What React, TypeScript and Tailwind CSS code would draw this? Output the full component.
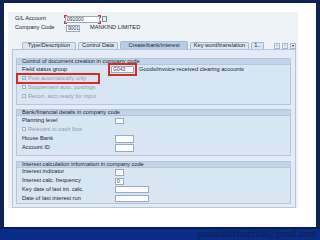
import React from "react";

function Box({ w, h = "h-[7px]", children }: { w: string; h?: string; children?: React.ReactNode }) {
  return (
    <div className={`${w} ${h} border border-[#97abc3] bg-white flex items-center px-[1px] text-[5px] leading-none text-[#1e2a3a]`}>
      {children}
    </div>
  );
}

function Check({ label, checked }: { label: string; checked?: boolean }) {
  return (
    <div className="flex items-center gap-[2px] text-[#8e9bab]">
      <div className="w-[4px] h-[4px] border border-[#9fb0c4] bg-[#eef3f8] flex items-center justify-center">
        {checked && (
          <svg viewBox="0 0 4 4" className="w-[4px] h-[4px]">
            <path d="M0.6 2 L1.6 3 L3.4 0.8" stroke="#6b7686" strokeWidth="0.8" fill="none" />
          </svg>
        )}
      </div>
      <span>{label}</span>
    </div>
  );
}

function Row({ label, lw, children, h = "h-[9px]" }: { label: string; lw: string; children?: React.ReactNode; h?: string }) {
  return (
    <div className={`flex items-center ${h}`}>
      <span className={`${lw} shrink-0`}>{label}</span>
      {children}
    </div>
  );
}

function Group({ title, children, cls }: { title: string; children: React.ReactNode; cls: string }) {
  return (
    <div className={`border border-[#b3c6dc] bg-[#d8e6f4] ${cls}`}>
      <div className="h-[6px] bg-[#c3d4e9] border-b border-[#b3c6dc] pl-[5px] flex items-center">{title}</div>
      <div className="pl-[5px]">{children}</div>
    </div>
  );
}

export default function App() {
  const tabs = [
    { t: "Type/Description", w: "w-[54px]" },
    { t: "Control Data", w: "w-[40px]" },
    { t: "Create/bank/interest", w: "w-[68px]", active: true },
    { t: "Key word/translation", w: "w-[59px]" },
    { t: "1..", w: "w-[13px]" },
  ];

  return (
    <div className="w-[320px] h-[240px] bg-[#0f2550] flex flex-col font-['Liberation_Sans',Arial,sans-serif] text-[5.7px] leading-none text-[#1a2433]">
      <div className="mx-[4px] mt-[3px] h-[224px] bg-white pt-[9px] pl-[4px]">
        <div className="w-[290px] h-[196px] bg-[#eef3f8] flex flex-col">
          {/* header fields */}
          <div className="pl-[7px] pt-[3px] flex flex-col gap-[1px]">
            <div className="flex items-center h-[8px]">
              <span className="w-[50px]">G/L Account</span>
              <div className="relative">
                <Box w="w-[35px]">091000</Box>
                <div className="absolute -left-[1px] -top-[1px] w-[3px] h-[3px] border-l border-t border-[#d23a3a]" />
                <div className="absolute -right-[1px] -top-[1px] w-[3px] h-[3px] border-r border-t border-[#d23a3a]" />
                <div className="absolute -left-[1px] -bottom-[1px] w-[3px] h-[3px] border-l border-b border-[#d23a3a]" />
                <div className="absolute -right-[1px] -bottom-[1px] w-[3px] h-[3px] border-r border-b border-[#d23a3a]" />
              </div>
              <div className="ml-[2px] w-[5px] h-[6px] border border-[#7d8fa6] bg-[#e6edf5]" />
            </div>
            <div className="flex items-center h-[8px]">
              <span className="w-[51px]">Company Code</span>
              <Box w="w-[14px]">9001</Box>
              <span className="ml-[10px]">MANKIND LIMITED</span>
            </div>
          </div>

          {/* tabs */}
          <div className="mt-[9px] ml-[14px] flex items-end h-[8px] gap-[2px]">
            {tabs.map((tb) => (
              <div
                key={tb.t}
                className={`${tb.w} h-[7px] rounded-t-[2px] border border-b-0 border-[#a4b9d1] flex items-center justify-center ${
                  tb.active ? "bg-[#b7cde6] h-[8px]" : "bg-[#dde7f2]"
                }`}
              >
                {tb.t}
              </div>
            ))}
            <div className="ml-[8px] flex gap-[2px] items-center h-[7px]">
              <div className="w-[6px] h-[6px] border border-[#a4b9d1] bg-[#e6edf5] text-[4px] flex items-center justify-center">‹</div>
              <div className="w-[6px] h-[6px] border border-[#a4b9d1] bg-[#e6edf5] text-[4px] flex items-center justify-center">›</div>
              <div className="w-[6px] h-[6px] border border-[#a4b9d1] bg-[#e6edf5] text-[4px] flex items-center justify-center">▾</div>
            </div>
          </div>

          {/* tab content */}
          <div className="ml-[4px] w-[284px] h-[159px] border border-[#b3c6dc] bg-[#e3ecf6] pl-[3px] pt-[8px] flex flex-col">
            <Group title="Control of document creation in company code" cls="w-[275px] h-[47px]">
              <Row label="Field status group" lw="w-[89px]">
                <div className="border-2 border-[#d42a2a] p-[1px] -ml-[3px]">
                  <Box w="w-[23px]">G043</Box>
                </div>
                <span className="ml-[2px]">Goods/invoice received clearing accounts</span>
              </Row>
              <div className="h-[9px] flex items-center relative">
                <Check label="Post automatically only" checked />
                <div className="absolute -left-[6px] -top-[1px] w-[84px] h-[11px] border-2 border-[#d42a2a]" />
              </div>
              <div className="h-[9px] flex items-center">
                <Check label="Supplement auto. postings" />
              </div>
              <div className="h-[9px] flex items-center">
                <Check label="Recon. acct ready for input" />
              </div>
            </Group>

            <Group title="Bank/financial details in company code" cls="w-[275px] h-[47px] mt-[4px]">
              <Row label="Planning level" lw="w-[93px]">
                <Box w="w-[9px]" h="h-[6px]" />
              </Row>
              <div className="h-[9px] flex items-center">
                <Check label="Relevant to cash flow" />
              </div>
              <Row label="House Bank" lw="w-[93px]">
                <Box w="w-[19px]" h="h-[8px]" />
              </Row>
              <Row label="Account ID" lw="w-[93px]">
                <Box w="w-[19px]" h="h-[8px]" />
              </Row>
            </Group>

            <Group title="Interest calculation information in company code" cls="w-[275px] h-[43px] mt-[5px]">
              <Row label="Interest indicator" lw="w-[93px]" h="h-[8.7px]">
                <Box w="w-[9px]" />
              </Row>
              <Row label="Interest calc. frequency" lw="w-[93px]" h="h-[8.7px]">
                <Box w="w-[9px]">0</Box>
              </Row>
              <Row label="Key date of last int. calc." lw="w-[93px]" h="h-[8.7px]">
                <Box w="w-[34px]" />
              </Row>
              <Row label="Date of last interest run" lw="w-[93px]" h="h-[8.7px]">
                <Box w="w-[34px]" />
              </Row>
            </Group>
          </div>
        </div>
      </div>

      {/* slide footer */}
      <div className="h-[13px] border-t-2 border-[#0b1d44] bg-[#0a2c88] flex items-center justify-end pr-[4px]">
        <span className="font-['Liberation_Serif',serif] text-[9.5px] leading-none text-[#121c42]">prasanthictsapfico@gmail.com</span>
      </div>
    </div>
  );
}
